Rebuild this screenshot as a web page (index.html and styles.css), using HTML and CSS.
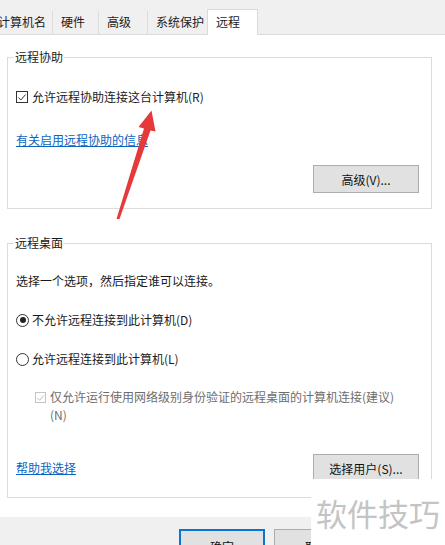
FILE: index.html
```html
<!DOCTYPE html>
<html lang="zh-CN">
<head>
    <meta charset="UTF-8">
    <meta name="viewport" content="width=device-width, initial-scale=1.0">
    <title>系统属性 - 远程</title>
    <link rel="stylesheet" href="styles.css">
</head>
<body>
    <div class="window">
        <div class="tabs">
            <div class="tab tab-name">计算机名</div>
            <div class="tab tab-hw">硬件</div>
            <div class="tab tab-adv">高级</div>
            <div class="tab tab-prot">系统保护</div>
            <div class="tab tab-remote active">远程</div>
        </div>

        <div class="panel">
            <fieldset class="group group-assist">
                <legend>远程协助</legend>
                <div class="option row-allow">
                    <span class="box checked">
                        <svg width="11" height="11" viewBox="0 0 11 11"><polyline points="1.5,5.5 4.2,8.2 9.5,2.2" fill="none" stroke="#333" stroke-width="1.1"/></svg>
                    </span>
                    允许远程协助连接这台计算机(R)
                </div>
                <a class="link row-info" href="#">有关启用远程协助的信息</a>
                <div class="actions row-advanced">
                    <button class="btn">高级(V)...</button>
                </div>
            </fieldset>

            <fieldset class="group group-desktop">
                <legend>远程桌面</legend>
                <div class="intro">选择一个选项，然后指定谁可以连接。</div>
                <div class="option row-deny">
                    <span class="radio selected"></span>
                    不允许远程连接到此计算机(D)
                </div>
                <div class="option row-permit">
                    <span class="radio"></span>
                    允许远程连接到此计算机(L)
                </div>
                <div class="option nla">
                    <span class="box disabled">
                        <svg width="10" height="10" viewBox="0 0 10 10"><polyline points="1.5,5 4,7.5 8.7,2" fill="none" stroke="#b5b5b5" stroke-width="1"/></svg>
                    </span>
                    <span>仅允许运行使用网络级别身份验证的远程桌面的计算机连接(建议)<br>(N)</span>
                </div>
                <div class="actions row-users">
                    <a class="link" href="#">帮助我选择</a>
                    <button class="btn">选择用户(S)...</button>
                </div>
            </fieldset>
        </div>

        <div class="footer">
            <button class="btn btn-default">确定</button>
            <button class="btn">取消</button>
        </div>

        <svg class="arrow" width="445" height="545" viewBox="0 0 445 545">
            <polygon points="151.5,110.5 138.5,127 144,128.5 116.5,219 119.5,219 150.5,130.5 155.5,131.5" fill="#e5393a"/>
        </svg>
        <div class="watermark">软件技巧</div>
    </div>
</body>
</html>
```

FILE: styles.css
```css
* {
    box-sizing: border-box;
}
body {
    margin: 0;
    background-color: #f0f0f0;
    font-family: "Noto Sans CJK SC", "Microsoft YaHei", sans-serif;
    font-size: 12px;
    line-height: 16px;
    color: #1a1a1a;
}
.window {
    position: relative;
    width: 445px;
    height: 545px;
    overflow: hidden;
}

/* tab strip */
.tabs {
    display: flex;
    align-items: flex-end;
    height: 35px;
    border-bottom: 1px solid #dadada;
    background-color: #f0f0f0;
}
.tab {
    height: 23px;
    padding: 3px 0 0 8px;
    border-left: 1px solid #dcdcdc;
    color: #222;
}
.tab-name {
    width: 63px;
    margin-left: -11px;
}
.tab-hw {
    width: 46px;
}
.tab-adv {
    width: 49px;
}
.tab-prot {
    width: 60px;
}
.tab.active {
    width: 51px;
    height: 26px;
    margin-bottom: -1px;
    padding-top: 4px;
    background-color: #fff;
    border: 1px solid #dadada;
    border-bottom: none;
}

/* white page */
.panel {
    background-color: #fff;
    padding: 14px 13px 19px 7px;
    height: 482px;
}
.group {
    margin: 0;
    padding: 0 12px 15px 8px;
    border: 1px solid #dcdcdc;
    min-width: 0;
}
.group legend {
    padding: 0 1px;
    margin-left: -2px;
    line-height: 16px;
}
.group-desktop {
    margin-top: 26px;
}

.option {
    display: flex;
    align-items: center;
}
.row-allow {
    margin-top: 24px;
}
.link {
    display: inline-block;
    color: #0a64c0;
    text-decoration: underline;
}
.row-info {
    margin-top: 27px;
}
.actions {
    display: flex;
    justify-content: flex-end;
    align-items: center;
}
.row-advanced {
    margin-top: 17px;
}
.row-users {
    justify-content: space-between;
    margin-top: 30px;
}

.intro {
    margin-top: 22px;
}
.row-deny {
    margin-top: 23px;
}
.row-permit {
    margin-top: 23px;
}
.nla {
    align-items: flex-start;
    margin-top: 21px;
    padding-left: 19px;
    line-height: 18px;
    color: #6d6d6d;
}

/* checkbox and radio glyphs */
.box {
    display: flex;
    align-items: center;
    justify-content: center;
    width: 12px;
    height: 12px;
    margin-right: 4px;
    border: 1px solid #333;
    background-color: #fff;
}
.box.disabled {
    width: 11px;
    height: 11px;
    margin-top: 4px;
    border-color: #c4c4c4;
}
.radio {
    position: relative;
    width: 13px;
    height: 13px;
    margin-right: 3px;
    border: 1px solid #333;
    border-radius: 50%;
    background-color: #fff;
}
.radio.selected::after {
    content: "";
    position: absolute;
    left: 2.5px;
    top: 2.5px;
    width: 6px;
    height: 6px;
    border-radius: 50%;
    background-color: #222;
}

/* buttons */
.btn {
    width: 106px;
    height: 28px;
    padding: 0;
    font-family: inherit;
    font-size: 12px;
    color: #111;
    background-color: #e1e1e1;
    border: 1px solid #adadad;
}
.footer {
    display: flex;
    gap: 9px;
    padding: 12px 0 0 179px;
}
.footer .btn {
    width: 86px;
    height: 28px;
    padding-top: 6px;
}
.btn-default {
    border: 2px solid #0a74d0;
}

/* overlays */
.arrow {
    position: absolute;
    left: 0;
    top: 0;
    pointer-events: none;
}
.watermark {
    position: absolute;
    left: 311px;
    top: 479px;
    width: 134px;
    height: 66px;
    padding: 14px 0 0 5px;
    background-color: #fff;
    font-size: 31px;
    line-height: 40px;
    letter-spacing: 0;
    color: #c4c4c4;
}
```
